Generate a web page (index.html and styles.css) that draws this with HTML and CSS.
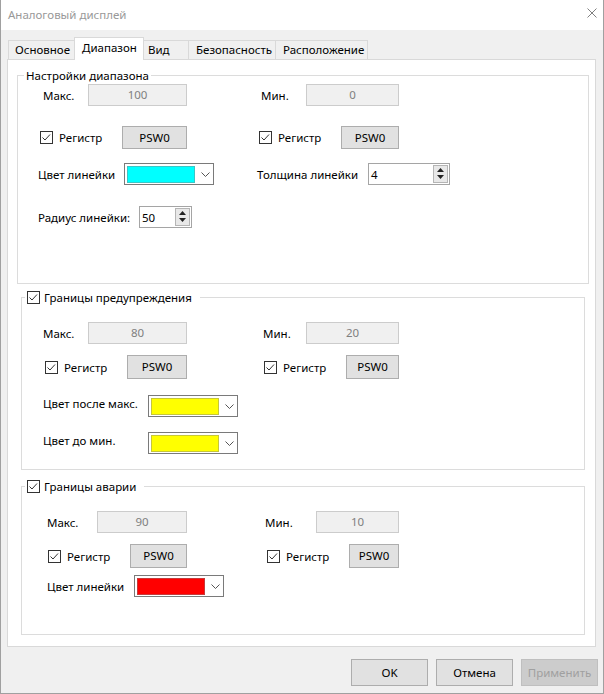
FILE: index.html
```html
<!doctype html>
<html lang="ru">
<head>
    <meta charset="UTF-8">
    <title>Аналоговый дисплей</title>
    <link rel="stylesheet" href="styles.css">
</head>
<body>
<!-- shared glyphs: checked box, combo arrow, spin arrows -->
<svg class="defs" width="0" height="0">
    <symbol id="check" viewBox="0 0 13 13">
        <rect x=".5" y=".5" width="12" height="12" fill="#fff" stroke="#333"/>
        <path d="M2.5 6.5l2.5 2.5 5-5.5" fill="none" stroke="#333"/>
    </symbol>
    <symbol id="chevron" viewBox="0 0 9 5">
        <path d="M.5 .5l4 4 4-4" fill="none" stroke="#555"/>
    </symbol>
    <symbol id="up" viewBox="0 0 7 4"><path d="M0 4h7L3.5 0z" fill="#222"/></symbol>
    <symbol id="down" viewBox="0 0 7 4"><path d="M0 0h7L3.5 4z" fill="#222"/></symbol>
</svg>

<div class="window">
    <div class="titlebar">
        <span class="title">Аналоговый дисплей</span>
        <svg class="close" width="10" height="10" viewBox="0 0 10 10">
            <path d="M.5 .5l9 9M9.5 .5l-9 9" stroke="#808080" stroke-width="1"/>
        </svg>
    </div>

    <div class="tabs">
        <div class="tab t1">Основное</div>
        <div class="tab t2 active">Диапазон</div>
        <div class="tab t3">Вид</div>
        <div class="tab t4">Безопасность</div>
        <div class="tab t5">Расположение</div>
    </div>

    <div class="panel">
        <fieldset class="group g1">
            <legend>Настройки диапазона</legend>
            <div class="row mt1 pl25">
                <span class="lbl w45">Макс.</span>
                <span class="edit w99">100</span>
                <span class="lbl w45 ml74">Мин.</span>
                <span class="edit w93">0</span>
            </div>
            <div class="row mt20 pl22">
                <span class="chk"><svg class="box"><use href="#check"/></svg>Регистр</span>
                <span class="btn w65 h23">PSW0</span>
                <span class="chk ml72"><svg class="box"><use href="#check"/></svg>Регистр</span>
                <span class="btn w58 h23">PSW0</span>
            </div>
            <div class="row mt14 pl20">
                <span class="lbl w86">Цвет линейки</span>
                <span class="combo"><span class="swatch cyan"></span><svg class="arrow"><use href="#chevron"/></svg></span>
                <span class="lbl w111 ml43">Толщина линейки</span>
                <span class="spin w82 h23">4<span class="spin-btns"><svg><use href="#up"/></svg><svg><use href="#down"/></svg></span></span>
            </div>
            <div class="row mt21 pl20">
                <span class="lbl w101">Радиус линейки:</span>
                <span class="spin w53">50<span class="spin-btns"><svg><use href="#up"/></svg><svg><use href="#down"/></svg></span></span>
            </div>
        </fieldset>

        <fieldset class="group g2">
            <legend><span class="legend-chk"><svg class="box"><use href="#check"/></svg>Границы предупреждения</span></legend>
            <div class="row mt17 pl21">
                <span class="lbl w45">Макс.</span>
                <span class="edit w99">80</span>
                <span class="lbl w43 ml76">Мин.</span>
                <span class="edit w93">20</span>
            </div>
            <div class="row mt11 pl23">
                <span class="chk"><svg class="box"><use href="#check"/></svg>Регистр</span>
                <span class="btn w60">PSW0</span>
                <span class="chk ml77"><svg class="box"><use href="#check"/></svg>Регистр</span>
                <span class="btn w53">PSW0</span>
            </div>
            <div class="row mt16 pl21">
                <span class="lbl w105 raised">Цвет после макс.</span>
                <span class="combo"><span class="swatch yellow"></span><svg class="arrow"><use href="#chevron"/></svg></span>
            </div>
            <div class="row mt15 pl21">
                <span class="lbl w105 raised">Цвет до мин.</span>
                <span class="combo"><span class="swatch yellow"></span><svg class="arrow"><use href="#chevron"/></svg></span>
            </div>
        </fieldset>

        <fieldset class="group g3">
            <legend><span class="legend-chk"><svg class="box"><use href="#check"/></svg>Границы аварии</span></legend>
            <div class="row mt17 pl25">
                <span class="lbl w50">Макс.</span>
                <span class="edit w90">90</span>
                <span class="lbl w51 ml78">Мин.</span>
                <span class="edit w83">10</span>
            </div>
            <div class="row mt11 pl26">
                <span class="chk"><svg class="box"><use href="#check"/></svg>Регистр</span>
                <span class="btn w57">PSW0</span>
                <span class="chk ml80"><svg class="box"><use href="#check"/></svg>Регистр</span>
                <span class="btn w50">PSW0</span>
            </div>
            <div class="row mt7 pl25">
                <span class="lbl w87">Цвет линейки</span>
                <span class="combo"><span class="swatch red"></span><svg class="arrow"><use href="#chevron"/></svg></span>
            </div>
        </fieldset>
    </div>

    <div class="buttons">
        <button class="dlg-btn">OK</button>
        <button class="dlg-btn">Отмена</button>
        <button class="dlg-btn" disabled>Применить</button>
    </div>
</div>
</body>
</html>
```

FILE: styles.css
```css
*{
    box-sizing: border-box;
}
body{
    margin: 0;
    font-family: "Noto Sans", "Open Sans", sans-serif;
    font-size: 11.5px;
    line-height: 15px;
    color: #000;
    background: #f0f0f0;
}
.defs{
    position: absolute;
    width: 0;
    height: 0;
}

/* window frame */
.window{
    width: 604px;
    height: 694px;
    border: 1px solid #a0a0a0;
    border-top: none;
    background: #f0f0f0;
}
.titlebar{
    height: 30px;
    background: #fff;
    display: flex;
    justify-content: space-between;
    align-items: flex-start;
    padding: 7px 6px 0 7px;
}
.title{
    color: #999;
}
.close{
    margin-top: 1px;
}

/* tab strip */
.tabs{
    height: 29px;
    display: flex;
    align-items: flex-end;
    padding-left: 7px;
}
.tab{
    height: 19px;
    line-height: 17px;
    padding-left: 6px;
    border: 1px solid #d9d9d9;
    border-bottom: none;
    margin-left: -1px;
    background: #f0f0f0;
}
.tab:first-child{
    margin-left: 0;
}
.tab.active{
    position: relative;
    z-index: 1;
    height: 23px;
    line-height: 20px;
    margin-bottom: -1px;
    padding-left: 7px;
    background: #fff;
}
.t1{ width: 67px; }
.t2{ width: 70px; }
.t3{ width: 46px; padding-left: 4px; }
.t4{ width: 88px; padding-left: 7px; }
.t5{ width: 93px; padding-left: 7px; }

.panel{
    width: 589px;
    height: 588px;
    margin-left: 6px;
    background: #fff;
    border: 1px solid #d9d9d9;
    overflow: hidden;
}

/* group boxes */
.group{
    margin: 0;
    padding: 0;
    min-width: 0;
    border: 1px solid #dcdcdc;
}
.group legend{
    height: 15px;
    line-height: 15px;
    padding: 0 2px;
}
.g1{
    width: 572px;
    height: 216px;
    margin: 8px 0 0 9px;
}
.g1 legend{
    margin-left: 6px;
}
.g2, .g3{
    width: 564px;
    margin-left: 13px;
}
.g2{
    height: 180px;
    margin-top: 6px;
}
.g3{
    height: 156px;
    margin-top: 9px;
}
.g2 legend, .g3 legend{
    margin-left: 3px;
    padding: 0 8px 0 2px;
}
.legend-chk{
    display: inline-flex;
    align-items: center;
    height: 15px;
}
.legend-chk .box{
    margin-right: 4px;
}

/* rows of controls */
.row{
    display: flex;
    align-items: center;
}
.lbl{
    flex: none;
}
.raised{
    margin-bottom: 5px;
}
.box{
    width: 13px;
    height: 13px;
    flex: none;
}
.chk{
    flex: none;
    width: 82px;
    display: flex;
    align-items: center;
}
.chk .box{
    margin-right: 6px;
}
.edit{
    flex: none;
    height: 22px;
    line-height: 20px;
    text-align: center;
    color: #7f7f7f;
    background: #f0f0f0;
    border: 1px solid #cccccc;
}
.btn{
    flex: none;
    height: 24px;
    line-height: 22px;
    text-align: center;
    background: #e1e1e1;
    border: 1px solid #adadad;
}
.h23{
    height: 23px;
    line-height: 21px;
}
.combo{
    flex: none;
    width: 90px;
    height: 22px;
    display: flex;
    align-items: center;
    padding: 0 0 0 2px;
    background: #fff;
    border: 1px solid #7a7a7a;
}
.swatch{
    width: 68px;
    height: 17px;
    border: 1px solid rgba(128, 128, 128, .45);
}
.cyan{ background-color: #00ffff; }
.yellow{ background-color: #ffff00; }
.red{ background-color: #ff0000; }
.arrow{
    width: 9px;
    height: 5px;
    margin-left: 6px;
}
.spin{
    flex: none;
    height: 22px;
    display: flex;
    align-items: center;
    justify-content: space-between;
    padding: 0 1px 0 2px;
    background: #fff;
    border: 1px solid #a5a5a5;
}
.spin-btns{
    width: 15px;
    height: 18px;
    display: flex;
    flex-direction: column;
    border: 1px solid #b5b5b5;
    background: #e8e8e8;
}
.spin-btns svg{
    width: 7px;
    height: 4px;
    margin: 2px auto 0;
}
.spin-btns svg + svg{
    margin-top: 3px;
}

/* bottom buttons */
.buttons{
    display: flex;
    justify-content: flex-end;
    gap: 8px;
    margin-top: 12px;
    padding-right: 5px;
}
.dlg-btn{
    width: 77px;
    height: 27px;
    font: inherit;
    color: #000;
    background: #e1e1e1;
    border: 1px solid #adadad;
    padding: 0;
}
.dlg-btn:disabled{
    color: #a0a0a0;
    background: #cccccc;
    border-color: #bfbfbf;
}

/* sizes */
.w43{ width: 43px; }
.w45{ width: 45px; }
.w50{ width: 50px; }
.w51{ width: 51px; }
.w53{ width: 53px; }
.w57{ width: 57px; }
.w58{ width: 58px; }
.w60{ width: 60px; }
.w65{ width: 65px; }
.w82{ width: 82px; }
.w83{ width: 83px; }
.w86{ width: 86px; }
.w87{ width: 87px; }
.w90{ width: 90px; }
.w93{ width: 93px; }
.w99{ width: 99px; }
.w101{ width: 101px; }
.w105{ width: 105px; }
.w111{ width: 111px; }

.ml43{ margin-left: 43px; }
.ml72{ margin-left: 72px; }
.ml74{ margin-left: 74px; }
.ml76{ margin-left: 76px; }
.ml77{ margin-left: 77px; }
.ml78{ margin-left: 78px; }
.ml80{ margin-left: 80px; }

.pl20{ padding-left: 20px; }
.pl21{ padding-left: 21px; }
.pl22{ padding-left: 22px; }
.pl23{ padding-left: 23px; }
.pl25{ padding-left: 25px; }
.pl26{ padding-left: 26px; }

.mt1{ margin-top: 1px; }
.mt7{ margin-top: 7px; }
.mt11{ margin-top: 11px; }
.mt14{ margin-top: 14px; }
.mt15{ margin-top: 15px; }
.mt16{ margin-top: 16px; }
.mt17{ margin-top: 17px; }
.mt20{ margin-top: 20px; }
.mt21{ margin-top: 21px; }
```
